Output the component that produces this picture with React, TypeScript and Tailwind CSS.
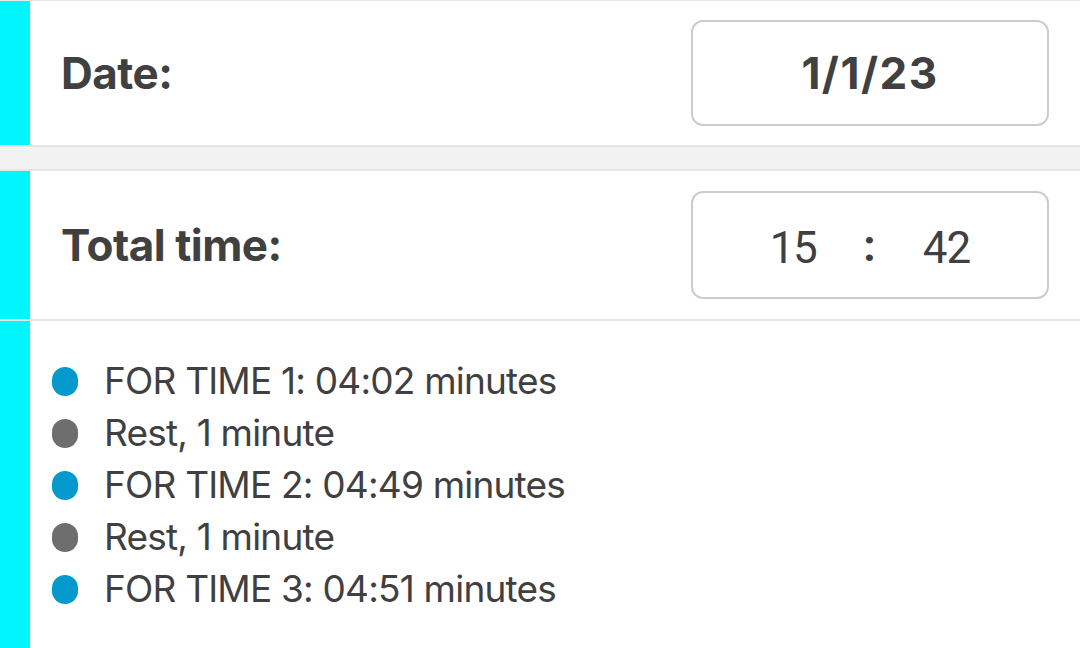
import React from "react"

const sets = [
  { label: "FOR TIME 1: 04:02 minutes", work: true },
  { label: "Rest, 1 minute", work: false },
  { label: "FOR TIME 2: 04:49 minutes", work: true },
  { label: "Rest, 1 minute", work: false },
  { label: "FOR TIME 3: 04:51 minutes", work: true },
]

const Row = ({ children, className = "" }: { children: React.ReactNode; className?: string }) => (
  <div className={`flex ${className}`}>
    <div className="w-[30px] shrink-0 bg-[#00f5ff]" />
    <div className="flex flex-1 items-center justify-between pl-[31px] pr-[31px]">{children}</div>
  </div>
)

export default function App() {
  return (
    <div
      className="w-full h-[648px] overflow-hidden bg-white text-[#404040] flex flex-col"
      style={{ fontFamily: "Inter, 'Noto Sans', sans-serif" }}
    >
      {/* Date */}
      <div className="h-[1px] bg-[#e8e8e8]" />
      <Row className="h-[144px]">
        <span className="text-[44px] font-bold tracking-[-0.5px]">Date:</span>
        <div className="w-[358px] h-[106px] rounded-[12px] border-2 border-[#cccccc] flex items-center justify-center">
          <span className="text-[44px] font-bold tracking-[1.5px]">1/1/23</span>
        </div>
      </Row>

      {/* divider */}
      <div className="h-[26px] bg-[#f2f2f2] border-y-2 border-[#e6e6e6]" />

      {/* Total time */}
      <Row className="h-[148px]">
        <span className="text-[44px] font-bold tracking-[-0.5px]">Total time:</span>
        <div
          className="w-[358px] h-[108px] rounded-[12px] border-2 border-[#cccccc] flex items-center justify-center gap-[47px] pt-[5px] text-[44px]"
          style={{ fontFamily: "Roboto, sans-serif" }}
        >
          <span className="tracking-[-1.5px]">15</span>
          <span className="font-bold pb-[4px]">:</span>
          <span className="tracking-[-1px]">42</span>
        </div>
      </Row>
      <div className="h-[2px] bg-[#e6e6e6]" />

      {/* Workout list */}
      <div className="flex flex-1">
        <div className="w-[30px] shrink-0 bg-[#00f5ff]" />
        <ul className="pl-[22px] pt-[34px] flex flex-col">
          {sets.map((s, i) => (
            <li key={i} className="flex items-center gap-[26px] h-[52px] text-[37px] tracking-[-0.8px]">
              <span className={`w-[26px] h-[29px] rounded-full ${s.work ? "bg-[#0399cc]" : "bg-[#6e6e6e]"}`} />
              <span>{s.label}</span>
            </li>
          ))}
        </ul>
      </div>
    </div>
  )
}
